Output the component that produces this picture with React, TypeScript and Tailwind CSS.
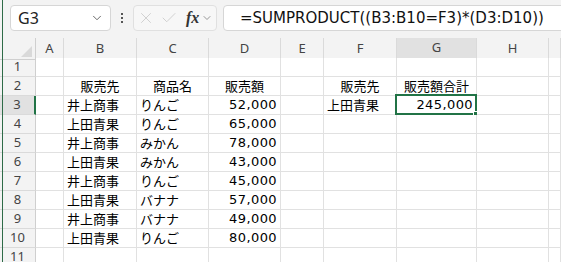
import { ChevronDown, X, Check } from "lucide-react";

const COLS = ["A", "B", "C", "D", "E", "F", "G", "H", ""];

type Cell = { text: string; align?: "left" | "center" | "right" };

const ROWS: Record<number, Record<number, Cell>> = {
  2: {
    1: { text: "販売先", align: "center" },
    2: { text: "商品名", align: "center" },
    3: { text: "販売額", align: "center" },
    5: { text: "販売先", align: "center" },
    6: { text: "販売額合計", align: "center" },
  },
  3: {
    1: { text: "井上商事" },
    2: { text: "りんご" },
    3: { text: "52,000", align: "right" },
    5: { text: "上田青果" },
    6: { text: "245,000", align: "right" },
  },
  4: { 1: { text: "上田青果" }, 2: { text: "りんご" }, 3: { text: "65,000", align: "right" } },
  5: { 1: { text: "井上商事" }, 2: { text: "みかん" }, 3: { text: "78,000", align: "right" } },
  6: { 1: { text: "上田青果" }, 2: { text: "みかん" }, 3: { text: "43,000", align: "right" } },
  7: { 1: { text: "井上商事" }, 2: { text: "りんご" }, 3: { text: "45,000", align: "right" } },
  8: { 1: { text: "上田青果" }, 2: { text: "バナナ" }, 3: { text: "57,000", align: "right" } },
  9: { 1: { text: "井上商事" }, 2: { text: "バナナ" }, 3: { text: "49,000", align: "right" } },
  10: { 1: { text: "上田青果" }, 2: { text: "りんご" }, 3: { text: "80,000", align: "right" } },
};

const gridCols =
  "grid grid-cols-[36px_28px_73px_72px_72px_43px_73px_80px_72px_1fr]";

function SheetCell({ cell, selected }: { cell?: Cell; selected?: boolean }) {
  const isNum = cell?.align === "right";
  const align = isNum
    ? "justify-end pr-[3px]"
    : cell?.align === "center"
      ? "justify-center"
      : "justify-start pl-[3px]";
  return (
    <div
      className={`relative flex h-[19px] items-end border-r border-b border-[#e1e1e1] bg-white pb-[1px] text-[13px] leading-[16px] text-black ${align}`}
    >
      <span
        className={`whitespace-nowrap ${isNum ? "tracking-[0.4px]" : ""}`}
        style={isNum ? { fontFamily: '"DejaVu Sans", sans-serif' } : undefined}
      >
        {cell?.text}
      </span>
      {selected && (
        <div className="pointer-events-none absolute -top-[2px] -left-[2px] -right-[1px] -bottom-[1px] border-2 border-[#217346]">
          <div className="absolute -right-[4px] -bottom-[4px] h-[6px] w-[6px] border border-white bg-[#217346]" />
        </div>
      )}
    </div>
  );
}

export default function App() {
  return (
    <div
      className="relative h-[262px] w-[561px] overflow-hidden bg-white"
      style={{ fontFamily: '"Noto Sans CJK JP", "Noto Sans", sans-serif' }}
    >
      {/* toolbar */}
      <div className="flex h-[38px] items-start bg-[#f3f3f3] pt-[5px] pl-[10px]">
        <div className="flex h-[26px] w-[101px] shrink-0 items-center justify-between rounded-[4px] border border-[#d6d6d6] bg-white pr-[6px] pl-[7px]">
          <span className="text-[16px] text-[#222]" style={{ fontFamily: '"Noto Sans", sans-serif' }}>
            G3
          </span>
          <ChevronDown size={14} strokeWidth={1.5} className="text-[#555]" />
        </div>
        <div className="flex h-[26px] w-[22px] shrink-0 flex-col items-center justify-center gap-[2px]">
          <span className="h-[2px] w-[2px] bg-[#555]" />
          <span className="h-[2px] w-[2px] bg-[#555]" />
          <span className="h-[2px] w-[2px] bg-[#555]" />
        </div>
        <div className="flex h-[26px] w-[84px] shrink-0 items-center rounded-[4px] border border-[#e0e0e0] bg-[#f7f7f7] pl-[3px]">
          <X size={18} strokeWidth={1} className="text-[#c4c4c4]" />
          <Check size={18} strokeWidth={1} className="ml-[5px] text-[#c4c4c4]" />
          <span
            className="ml-[8px] text-[16px] font-bold italic text-[#333]"
            style={{ fontFamily: '"Liberation Serif", serif' }}
          >
            fx
          </span>
          <ChevronDown size={12} strokeWidth={1.5} className="ml-[2px] text-[#777]" />
        </div>
        <div className="ml-[6px] flex h-[26px] w-[360px] shrink-0 items-center rounded-[4px] border border-[#d6d6d6] bg-white pl-[16px]">
          <span className="whitespace-nowrap text-[15px] text-[#111]" style={{ fontFamily: '"DejaVu Sans", sans-serif' }}>
            =SUMPRODUCT((B3:B10=F3)*(D3:D10))
          </span>
        </div>
      </div>

      {/* column headers */}
      <div className={`${gridCols} h-[20px] bg-[#f3f3f3]`} style={{ fontFamily: '"Noto Sans", sans-serif' }}>
        <div className="relative border-r border-b border-[#cfcfcf]">
          <div className="absolute right-[3px] bottom-[2px] h-0 w-0 border-b-[11px] border-l-[11px] border-b-[#d9d9d9] border-l-transparent" />
        </div>
        {COLS.map((c, i) => (
          <div
            key={i}
            className={`flex items-center justify-center border-r border-[#dadada] text-[13px] text-[#444] ${
              c === "G" ? "border-b-2 border-b-[#217346] bg-[#e1e1e1]" : "border-b border-b-[#cfcfcf]"
            }`}
          >
            {c}
          </div>
        ))}
      </div>

      {/* rows */}
      {Array.from({ length: 11 }, (_, r) => r + 1).map((r) => (
        <div key={r} className={gridCols}>
          <div
            className={`flex h-[19px] items-center justify-center border-b border-[#dadada] text-[13px] text-[#444] ${
              r === 3 ? "border-r-2 border-r-[#217346] bg-[#e1e1e1]" : "border-r border-r-[#cfcfcf] bg-[#f3f3f3]"
            }`}
            style={{ fontFamily: '"Noto Sans", sans-serif' }}
          >
            {r}
          </div>
          {COLS.map((_, ci) => (
            <SheetCell key={ci} cell={ROWS[r]?.[ci]} selected={r === 3 && ci === 6} />
          ))}
        </div>
      ))}

      <div className="absolute top-0 bottom-0 left-[2px] w-px bg-[#2e6b47]" />
    </div>
  );
}
